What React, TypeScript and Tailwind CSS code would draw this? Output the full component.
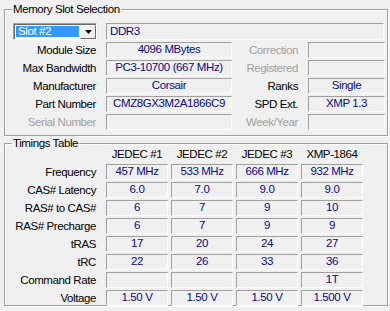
import { ReactNode } from "react";
import clsx from "clsx";

function GroupBox({ title, className, children }: { title: string; className?: string; children: ReactNode }) {
  return (
    <div
      className={clsx(
        "relative w-[384px] border border-[#a0a0a0] shadow-[inset_1px_1px_0_#fff,1px_1px_0_#fff]",
        className
      )}
    >
      <span className="absolute left-[7px] top-[-8px] bg-[#f0f0f0] px-[1px] leading-[14px]">{title}</span>
      {children}
    </div>
  );
}

function Field({ children, className, left }: { children?: ReactNode; className?: string; left?: boolean }) {
  return (
    <div
      className={clsx(
        "h-[16px] border border-t-[#a0a0a0] border-l-[#a0a0a0] border-b-white border-r-white text-[#0a0a84] flex items-center leading-none whitespace-nowrap",
        left ? "justify-start pl-[3px]" : "justify-center",
        className
      )}
    >
      {children}
    </div>
  );
}

function Label({ children, dim, className }: { children: ReactNode; dim?: boolean; className?: string }) {
  return (
    <div className={clsx("text-right leading-[16px] whitespace-nowrap", dim ? "text-[#a0a0a0]" : "text-black", className)}>
      {children}
    </div>
  );
}

const slotRows = [
  { label: "Module Size", value: "4096 MBytes", rLabel: "Correction", rValue: "", rDim: true },
  { label: "Max Bandwidth", value: "PC3-10700 (667 MHz)", rLabel: "Registered", rValue: "", rDim: true },
  { label: "Manufacturer", value: "Corsair", rLabel: "Ranks", rValue: "Single" },
  { label: "Part Number", value: "CMZ8GX3M2A1866C9", rLabel: "SPD Ext.", rValue: "XMP 1.3" },
  { label: "Serial Number", value: "", dim: true, rLabel: "Week/Year", rValue: "", rDim: true },
];

const headers = ["JEDEC #1", "JEDEC #2", "JEDEC #3", "XMP-1864"];

const timings: [string, string[]][] = [
  ["Frequency", ["457 MHz", "533 MHz", "666 MHz", "932 MHz"]],
  ["CAS# Latency", ["6.0", "7.0", "9.0", "9.0"]],
  ["RAS# to CAS#", ["6", "7", "9", "10"]],
  ["RAS# Precharge", ["6", "7", "9", "9"]],
  ["tRAS", ["17", "20", "24", "27"]],
  ["tRC", ["22", "26", "33", "36"]],
  ["Command Rate", ["", "", "", "1T"]],
  ["Voltage", ["1.50 V", "1.50 V", "1.50 V", "1.500 V"]],
];

export default function App() {
  return (
    <div className="w-[390px] h-[311px] overflow-hidden bg-[#f0f0f0] pl-[4px] pt-[9px] text-[11.5px] tracking-[-0.4px] text-black font-['Liberation_Sans',Arial,sans-serif]">
      {/* Memory Slot Selection */}
      <GroupBox title="Memory Slot Selection" className="h-[127px]">
        <div className="flex flex-col gap-[2px] pt-[13px]">
          <div className="flex h-[17px] items-stretch">
            <div className="ml-[8px] flex w-[84px] border border-t-[#a0a0a0] border-l-[#a0a0a0] border-b-white border-r-white bg-white shadow-[inset_1px_1px_0_#696969]">
              <div className="m-[2px] mr-0 flex flex-1 items-center bg-[#3399ff] pl-[2px] leading-none text-white">Slot #2</div>
              <div className="ml-[1px] flex w-[16px] items-center justify-center border border-t-white border-l-white border-b-[#696969] border-r-[#696969] bg-[#f0f0f0] mt-[1px]">
                <svg width="7" height="4" viewBox="0 0 7 4">
                  <path d="M0 0h7L3.5 4z" fill="#000" />
                </svg>
              </div>
            </div>
            <Field left className="ml-[9px] w-[278px] !h-[17px]">DDR3</Field>
          </div>
          {slotRows.map((r) => (
            <div key={r.label} className="flex items-center">
              <Label dim={r.dim} className="w-[91px]">{r.label}</Label>
              <Field className="ml-[10px] w-[126px]">{r.value}</Field>
              <Label dim={r.rDim} className="w-[66px]">{r.rLabel}</Label>
              <Field className="ml-[10px] w-[77px]">{r.rValue}</Field>
            </div>
          ))}
        </div>
      </GroupBox>

      {/* Timings Table */}
      <GroupBox title="Timings Table" className="mt-[7px] h-[163px]">
        <div className="flex flex-col gap-[2px] pt-[2px]">
          <div className="flex h-[16px] items-center">
            <div className="w-[101px]" />
            <div className="flex gap-[3px]">
              {headers.map((h) => (
                <div key={h} className="w-[62px] text-center leading-[16px]">{h}</div>
              ))}
            </div>
          </div>
          {timings.map(([label, vals]) => (
            <div key={label} className="flex items-center">
              <Label className="w-[91px]">{label}</Label>
              <div className="ml-[10px] flex gap-[3px]">
                {vals.map((v, i) => (
                  <Field key={i} className="w-[62px]">{v}</Field>
                ))}
              </div>
            </div>
          ))}
        </div>
      </GroupBox>
    </div>
  );
}
